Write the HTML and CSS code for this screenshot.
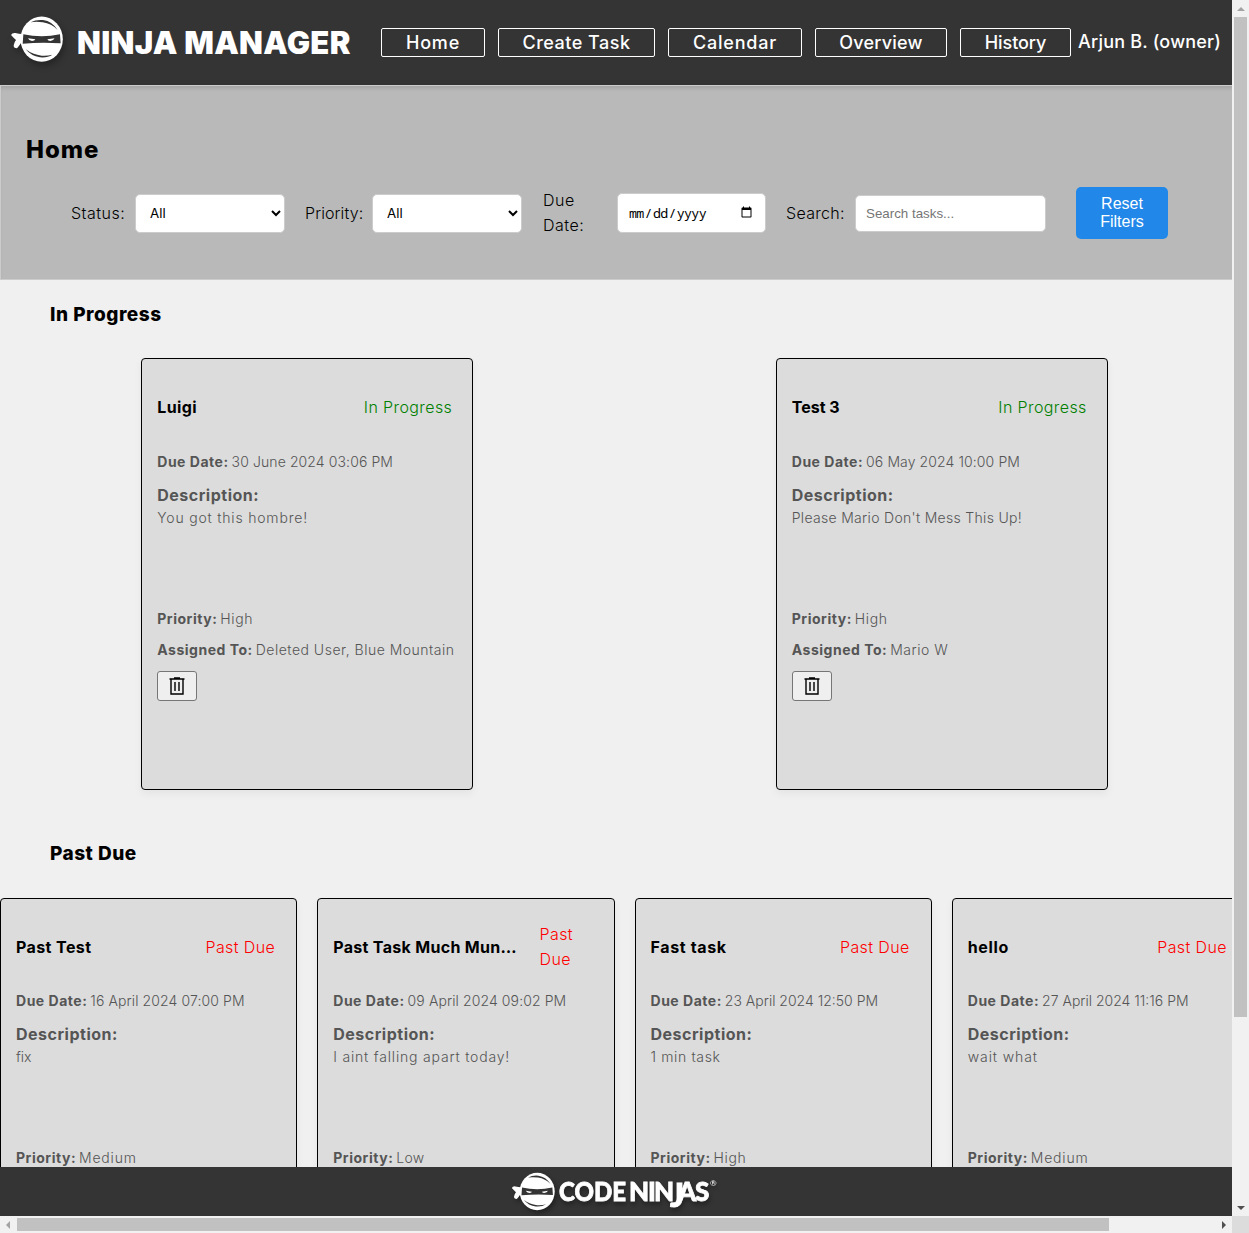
FILE: index.html
```
<!DOCTYPE html>
<html lang="en">
<head>
<meta charset="utf-8">
<title>Ninja Manager</title>
<link rel="stylesheet" href="styles.css">
</head>
<body>
<svg class="defs" width="0" height="0">
  <symbol id="ninja" viewBox="30 45 165 145">
    <ellipse cx="125" cy="117.500" rx="63.500" ry="68" fill="#fff"/>
    <path d="M33 105Q36 98 46 99L57 101 72 103V131L63 129Q57 138 51 145Q40 145 41 136Q42 127 48 120Q40 113 33 105Z" fill="#fff"/>
    <path d="M70 103Q125 115 180 103L182 130Q125 126 68 131Z" fill="#343434"/>
    <path d="M84 115L106 118Q104 123 96 123Q86 121 84 115ZM164 115L142 118Q144 123 151 123Q161 121 164 115Z" fill="#fff"/>
    <path d="M92 67Q108 58 129 60Q157 64 173 90Q155 71 128 67Q108 64 92 67ZM77 148Q98 164 125 167Q143 168 157 164Q143 174 120 172Q93 168 77 148Z" fill="#343434"/>
  </symbol>
</svg>
<div class="window">
  <div class="viewport">
    <header class="header">
      <svg class="header-logo"><use href="#ninja"/></svg>
      <div class="brand">NINJA MANAGER</div>
      <nav class="nav">
        <a class="nav-link home t8">Home</a>
        <a class="nav-link create t5">Create Task</a>
        <a class="nav-link calendar t8">Calendar</a>
        <a class="nav-link overview t2">Overview</a>
        <a class="nav-link history tn1">History</a>
      </nav>
      <div class="user t2">Arjun B. (owner)</div>
    </header>
    <main class="content">
      <section class="filters">
        <h2 class="page-title">Home</h2>
        <div class="filter-row">
          <label class="label status t5">Status:</label>
          <select class="field select"><option>All</option></select>
          <label class="label priority t1">Priority:</label>
          <select class="field select"><option>All</option></select>
          <label class="label due t5">Due Date:</label>
          <input class="field date" type="date">
          <label class="label search-label t3">Search:</label>
          <input class="field search" type="text" placeholder="Search tasks...">
          <button class="reset">Reset Filters</button>
        </div>
      </section>
      <h3 class="group-title">In Progress</h3>
      <div class="cards two">
        <article class="card">
          <div class="card-head"><h4 class="name t4">Luigi</h4><span class="state green t4">In Progress</span></div>
          <p class="line due-line"><b>Due Date:</b> <span class="t1">30 June 2024 03:06 PM</span></p>
          <div class="desc"><b class="desc-title">Description:</b><p class="line t8">You got this hombre!</p></div>
          <p class="line priority-line"><b>Priority:</b> <span class="t6">High</span></p>
          <p class="line"><b>Assigned To:</b> <span class="t5">Deleted User, Blue Mountain</span></p>
          <button class="delete"><svg width="18" height="20" viewBox="0 0 18 20"><path d="M1.500 3H16.500M6 2H12M3 3V18H15V3M7 6V15M11 6V15"/></svg></button>
        </article>
        <article class="card">
          <div class="card-head"><h4 class="name">Test 3</h4><span class="state green t4">In Progress</span></div>
          <p class="line due-line"><b>Due Date:</b> <span class="t1">06 May 2024 10:00 PM</span></p>
          <div class="desc"><b class="desc-title">Description:</b><p class="line t3">Please Mario Don't Mess This Up!</p></div>
          <p class="line priority-line"><b>Priority:</b> <span class="t6">High</span></p>
          <p class="line"><b>Assigned To:</b> <span class="t5">Mario W</span></p>
          <button class="delete"><svg width="18" height="20" viewBox="0 0 18 20"><path d="M1.500 3H16.500M6 2H12M3 3V18H15V3M7 6V15M11 6V15"/></svg></button>
        </article>
      </div>
      <h3 class="group-title past">Past Due</h3>
      <div class="cards four">
        <article class="card">
          <div class="card-head"><h4 class="name t4">Past Test</h4><span class="state red t4">Past Due</span></div>
          <p class="line due-line"><b>Due Date:</b> <span class="t1">16 April 2024 07:00 PM</span></p>
          <div class="desc"><b class="desc-title">Description:</b><p class="line">fix</p></div>
          <p class="line priority-line"><b>Priority:</b> <span class="t8">Medium</span></p>
        </article>
        <article class="card">
          <div class="card-head"><h4 class="name t3">Past Task Much Mun…</h4><span class="state red wrapped t4">Past Due</span></div>
          <p class="line due-line"><b>Due Date:</b> <span class="t1">09 April 2024 09:02 PM</span></p>
          <div class="desc"><b class="desc-title">Description:</b><p class="line t8">I aint falling apart today!</p></div>
          <p class="line priority-line"><b>Priority:</b> <span class="t3">Low</span></p>
        </article>
        <article class="card">
          <div class="card-head"><h4 class="name t6">Fast task</h4><span class="state red t4">Past Due</span></div>
          <p class="line due-line"><b>Due Date:</b> <span>23 April 2024 12:50 PM</span></p>
          <div class="desc"><b class="desc-title">Description:</b><p class="line t6">1 min task</p></div>
          <p class="line priority-line"><b>Priority:</b> <span class="t6">High</span></p>
        </article>
        <article class="card">
          <div class="card-head"><h4 class="name t6">hello</h4><span class="state red t4">Past Due</span></div>
          <p class="line due-line"><b>Due Date:</b> <span>27 April 2024 11:16 PM</span></p>
          <div class="desc"><b class="desc-title">Description:</b><p class="line t9">wait what</p></div>
          <p class="line priority-line"><b>Priority:</b> <span class="t8">Medium</span></p>
        </article>
      </div>
    </main>
    <footer class="footer">
      <svg class="footer-logo"><use href="#ninja"/></svg>
      <svg class="wordmark" width="160" height="44" viewBox="0 0 160 44">
        <text x="2" y="31" font-size="26" textLength="67" lengthAdjust="spacingAndGlyphs">CODE</text>
        <text y="31" font-size="26"><tspan x="72 91 97">NIN</tspan><tspan x="113" y="37" font-size="33">J</tspan><tspan x="121 138" y="31">AS</tspan></text>
        <text class="mark" x="153" y="16" font-size="8">®</text>
      </svg>
    </footer>
  </div>
  <div class="scrollbar vertical"><i class="arrow up"></i><i class="thumb"></i><i class="arrow down"></i></div>
  <div class="scrollbar horizontal"><i class="arrow left"></i><i class="thumb"></i><i class="arrow right"></i></div>
  <div class="corner"></div>
</div>
</body>
</html>
```
FILE: styles.css
```
* { box-sizing: border-box; }
body { margin: 0; font-family: Inter, "Open Sans", sans-serif; font-weight: 300; color: #000; overflow: hidden; }
h2, h3, h4, p { margin: 0; }
.defs { display: block; }

/* letter spacing steps */
.tn1 { letter-spacing: -0.1px; }
.t1 { letter-spacing: 0.1px; }
.t2 { letter-spacing: 0.2px; }
.t3 { letter-spacing: 0.31px; }
.t4 { letter-spacing: 0.4px; }
.t5 { letter-spacing: 0.5px; }
.t6 { letter-spacing: 0.64px; }
.t8 { letter-spacing: 0.81px; }
.t9 { letter-spacing: 0.9px; }

.window { display: grid; grid-template: 1216px 17px / 1232px 17px; width: 1249px; height: 1233px; }
.viewport { display: flex; flex-direction: column; overflow: hidden; background: #f0f0f0; }

.header { display: flex; align-items: center; flex: none; height: 85px; background: #343434; color: #fff; padding-left: 10px; }
.header-logo { width: 55px; height: 48.300px; flex: none; margin-top: -6px; filter: drop-shadow(2px 4px 3px rgba(0, 0, 0, .3)); }
.brand { width: 304px; padding-left: 12px; font-size: 31px; font-weight: 900; letter-spacing: .3px; white-space: nowrap; flex: none; }
.nav { display: flex; gap: 13px; margin-left: 12px; }
.nav-link { height: 29px; line-height: 28px; border: 1px solid #fff; border-radius: 2px; text-align: center; font-size: 18px; font-weight: 500; white-space: nowrap; }
.home { width: 104px; }
.create { width: 157px; }
.calendar { width: 134px; }
.overview { width: 132px; }
.history { width: 111px; }
.user { margin: -2px 0 0 7px; font-size: 18px; font-weight: 450; white-space: nowrap; }

.content { flex: 1; min-height: 0; overflow: hidden; }
.filters { width: 1249px; height: 195px; padding: 46px 25px 0; background: #b9b9b9; border: 1px solid #ccc; box-shadow: inset 0 4px 4px -2px rgba(0, 0, 0, .12); }
.page-title { height: 36px; line-height: 36px; font-size: 24px; font-weight: 800; letter-spacing: 1px; }
.filter-row { display: flex; align-items: center; height: 56px; margin-top: 17px; margin-left: 45px; }
.label { font-size: 16px; line-height: 25px; flex: none; font-weight: 300; }
.status { width: 64px; }
.priority { width: 67px; margin-left: 20px; }
.due { width: 54px; margin-left: 21px; }
.search-label { width: 69px; margin-left: 20px; }
.field { border: 1px solid #ccc; border-radius: 5px; background: #fff; flex: none; }
.select { width: 150px; height: 39px; padding: 0 10px; font: 400 13.333px Inter, sans-serif; color: #000; }
.due + .field { margin-left: 20px; }
.date { width: 149px; height: 40px; padding: 10px; font: 13.333px "Noto Sans Mono", "Liberation Mono", monospace; letter-spacing: -.7px; color: #000; }
.search { width: 191px; height: 37px; padding: 10px; font: 13.333px "Liberation Sans", Arial, sans-serif; }
.search::placeholder { color: #757575; }
.reset { width: 92px; height: 52px; margin-left: 30px; padding: 0 20px; border: 0; border-radius: 5px; background: #2188e9; color: #fff; font: 16px/18px "Liberation Sans", Arial, sans-serif; }

.group-title { height: 30px; margin: 20px 0 0 50px; line-height: 30px; font-size: 19px; font-weight: 800; letter-spacing: .5px; }
.group-title.past { margin-top: 49px; }
.cards { display: grid; width: 1249px; gap: 20px; }
.two { grid-template-columns: 1fr 1fr; justify-items: center; margin-top: 28px; }
.four { grid-template-columns: repeat(4, 1fr); margin-top: 29px; }
.card { height: 432px; padding: 15px; border: 1px solid #000; border-radius: 4px; background: #dcdcdc; color: #555; box-shadow: 0 4px 8px rgba(0, 0, 0, .05); min-width: 0; }
.two .card { width: 332px; }
.card-head { display: flex; align-items: center; justify-content: space-between; height: 66px; padding-right: 6px; color: #000; }
.two .card-head { padding-right: 5px; }
.name { font-size: 16px; font-weight: 700; white-space: nowrap; }
.state { font-size: 16px; line-height: 25px; }
.wrapped { width: 53px; }
.green { color: #008000; }
.red { color: #f00; }
.line { height: 22px; line-height: 22px; font-size: 14px; white-space: nowrap; }
.line b { font-weight: 700; letter-spacing: .52px; margin-right: -1px; }
.due-line { margin-top: 10px; }
.two .due-line { margin-top: 11px; }
.desc { height: 125px; margin-top: 10px; }
.desc-title { display: block; height: 24px; line-height: 24px; font-size: 16px; font-weight: 700; letter-spacing: .5px; }
.priority-line { margin-bottom: 9px; }
.delete { display: grid; place-items: center; width: 40px; height: 30px; margin-top: 10px; padding: 0; border: 1px solid #767676; border-radius: 3px; background: #efefef; }
.delete svg { fill: none; stroke: #000; stroke-width: 1.400; }

.footer { display: flex; align-items: center; justify-content: center; flex: none; height: 49px; background: #343434; }
.footer-logo { width: 45.500px; height: 41px; flex: none; margin-left: -4px; filter: drop-shadow(2px 3px 2px rgba(0, 0, 0, .35)); }
.wordmark { margin-left: 1px; fill: #fff; stroke: #fff; stroke-width: .8; font-family: Lato, sans-serif; font-weight: 900; filter: drop-shadow(1px 3px 2px rgba(0, 0, 0, .35)); }
.mark { font-weight: 400; stroke: none; }

.scrollbar { display: flex; align-items: center; background: #f1f1f1; }
.vertical { flex-direction: column; grid-area: 1 / 2; padding: 7px 0 6px; }
.horizontal { grid-area: 2 / 1; padding: 0 6px 0 6px; }
.thumb { background: #c1c1c1; }
.vertical .thumb { width: 13px; height: 1000px; margin: 6px 0 auto; }
.horizontal .thumb { width: 1092px; height: 13px; margin: 0 auto 0 7px; }
.arrow { border: 4px solid transparent; }
.up { border-top: 0; border-bottom-color: #a3a3a3; }
.down { border-bottom: 0; border-top-color: #505050; }
.left { border-left: 0; border-right-color: #a3a3a3; }
.right { border-right: 0; border-left-color: #505050; }
.corner { background: #dcdcdc; }
```
